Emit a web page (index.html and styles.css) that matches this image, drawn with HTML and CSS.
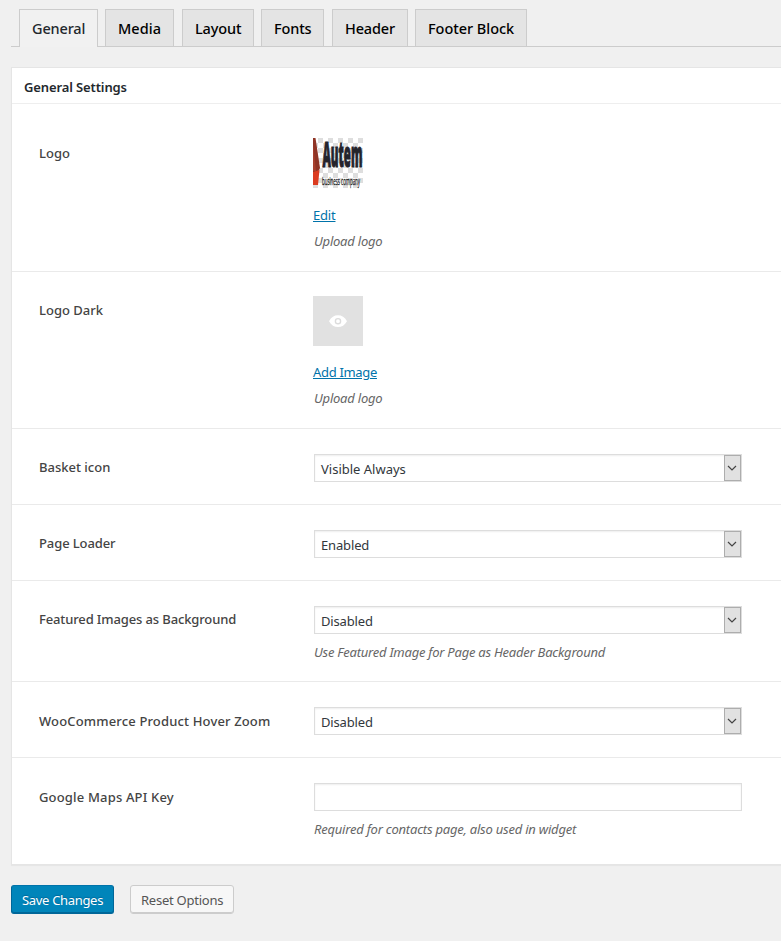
FILE: index.html
```html
<!DOCTYPE html>
<html lang="en">
<head>
<meta charset="utf-8">
<title>General Settings</title>
<link rel="stylesheet" href="styles.css">
</head>
<body>
<nav class="tabs">
  <a class="tab tab-general active"><span>General</span></a>
  <a class="tab tab-media"><span>Media</span></a>
  <a class="tab tab-layout"><span>Layout</span></a>
  <a class="tab tab-fonts"><span>Fonts</span></a>
  <a class="tab tab-header"><span>Header</span></a>
  <a class="tab tab-footer"><span>Footer Block</span></a>
</nav>
<main class="panel">
  <h2><span>General Settings</span></h2>
  <section class="row row-logo">
    <div class="label"><span>Logo</span></div>
    <div class="media">
      <svg class="thumb" viewBox="0 0 50 50">
        <defs><pattern id="checks" width="10" height="10" patternUnits="userSpaceOnUse"><path fill="#dedede" d="M5 0h5v5H5zM0 5h5v5H0z"/></pattern></defs>
        <path fill="#fff" d="M0 0h50v50H0z"/>
        <path fill="url(#checks)" d="M0 0h50v50H0z"/>
        <path fill="#8f3425" d="M0 0h2.500l4.500 30-2 4H0z"/>
        <path fill="#a8402e" d="M0 6l3 27H0z"/>
        <path fill="#db3b20" d="M0 34l6.500-2-1.500 15H0z"/>
        <text class="logo-name" x="9.500" y="29" textLength="40" lengthAdjust="spacingAndGlyphs">Autem</text>
        <text class="logo-tag" x="9" y="47" textLength="38" lengthAdjust="spacingAndGlyphs">business company</text>
      </svg>
      <a class="link"><span class="t-edit">Edit</span></a>
      <p class="note"><span class="t-upload">Upload logo</span></p>
    </div>
  </section>
  <section class="row row-dark">
    <div class="label"><span class="t-dark">Logo Dark</span></div>
    <div class="media">
      <svg class="thumb empty" viewBox="0 0 50 50"><path fill="#fff" d="M16 25.200C18.200 21.200 21.300 19.300 25 19.300s6.800 1.900 9 5.900c-2.200 4-5.300 5.900-9 5.900s-6.800-1.900-9-5.900z"/><circle cx="25" cy="25.200" r="2.600" fill="none" stroke="#dcdcdc" stroke-width="1.400"/></svg>
      <a class="link"><span class="t-add">Add Image</span></a>
      <p class="note"><span class="t-upload">Upload logo</span></p>
    </div>
  </section>
  <section class="row row-short">
    <div class="label"><span class="t-basket">Basket icon</span></div>
    <div class="control"><div class="select"><span class="t-visible">Visible Always</span><i class="drop"><svg viewBox="0 0 15 24"><path d="M3 10l4 4 4-4"/></svg></i></div></div>
  </section>
  <section class="row row-short">
    <div class="label"><span class="t-loader">Page Loader</span></div>
    <div class="control"><div class="select"><span class="t-enabled">Enabled</span><i class="drop"><svg viewBox="0 0 15 24"><path d="M3 10l4 4 4-4"/></svg></i></div></div>
  </section>
  <section class="row row-featured">
    <div class="label"><span class="t-featured">Featured Images as Background</span></div>
    <div class="control"><div class="select"><span class="t-disabled">Disabled</span><i class="drop"><svg viewBox="0 0 15 24"><path d="M3 10l4 4 4-4"/></svg></i></div>
    <p class="note"><span class="t-use">Use Featured Image for Page as Header Background</span></p></div>
  </section>
  <section class="row row-short lower">
    <div class="label"><span class="t-woo">WooCommerce Product Hover Zoom</span></div>
    <div class="control"><div class="select"><span class="t-disabled">Disabled</span><i class="drop"><svg viewBox="0 0 15 24"><path d="M3 10l4 4 4-4"/></svg></i></div></div>
  </section>
  <section class="row row-key lower">
    <div class="label"><span class="t-google">Google Maps API Key</span></div>
    <div class="control"><input class="field" type="text" aria-label="Google Maps API Key">
    <p class="note"><span class="t-required">Required for contacts page, also used in widget</span></p></div>
  </section>
</main>
<div class="actions">
  <button class="button primary"><span>Save Changes</span></button>
  <button class="button reset"><span>Reset Options</span></button>
</div>
</body>
</html>
```
FILE: styles.css
```css
* { box-sizing: border-box; }
body { margin: 0; height: 941px; overflow: hidden; background: #f0f0f0; color: #444; font: 13px/20px "Noto Sans", sans-serif; }
span { white-space: nowrap; }
p, h2 { margin: 0; }
.tabs { display: flex; margin-left: 11px; padding: 9px 0 0 8px; height: 47px; border-bottom: 1px solid #ccc; }
.tab { height: 37px; border: 1px solid #ccc; border-bottom: 0; background: #e4e4e4; color: #000; font-size: 14.500px; font-weight: 500; line-height: 36px; letter-spacing: -.15px; padding-left: 12px; margin-right: 7px; }
.tab.active { height: 38px; background: #f1f1f1; color: #23282d; }
.tab-general { width: 79px; }
.tab.tab-media { width: 69px; margin-right: 8px; letter-spacing: .05px; }
.tab-layout { width: 72px; }
.tab-fonts { width: 63px; margin-right: 8px; }
.tab-header { width: 76px; }
.tab.tab-footer { width: 112px; letter-spacing: -.04px; }
.panel { margin: 20px 0 0 11px; width: 790px; height: 798px; background: #fff; border: 1px solid #e5e5e5; box-shadow: 0 1px 1px rgba(0,0,0,.04); }
h2 { height: 36px; padding-left: 12px; border-bottom: 1px solid #eee; color: #23282d; font-size: 13px; font-weight: 600; line-height: 38px; letter-spacing: -.12px; }
.row { display: grid; grid-template-columns: 274px 430px; padding: 25px 0 0 27px; border-bottom: 1px solid #eaeaea; }
.row-logo { height: 168px; padding-top: 34px; }
.row-dark { height: 157px; padding-top: 24px; }
.row-short { height: 76px; }
.row-featured { height: 101px; }
.row-key { height: 107px; border-bottom: 0; }
.label { padding-top: 3px; font-weight: 500; }
.lower .label { padding-top: 4px; }
.row-logo .label, .row-dark .label { padding-top: 4px; }
.row-logo .label { padding-top: 5px; }
.thumb { display: block; width: 50px; height: 50px; overflow: visible; }
.empty { background: #e1e1e1; }
.logo-name { font: 800 35px "Open Sans", sans-serif; fill: #24242c; stroke: #24242c; stroke-width: 1.200; }
.logo-tag { font: 11px "Open Sans", sans-serif; fill: #222; stroke: #222; stroke-width: .3; }
.link { display: block; margin-top: 17px; color: #0073aa; text-decoration: underline; }
.row-dark .link { margin-top: 16px; }
.note { color: #666; font-style: italic; }
.media .note { margin-top: 6px; padding-left: 1px; }
.control { padding-left: 1px; }
.control .note { margin-top: 8px; }
.select, .field { display: flex; width: 428px; height: 28px; border: 1px solid #ddd; background: #fff; box-shadow: inset 0 1px 2px rgba(0,0,0,.07); color: #32373c; }
.select { justify-content: space-between; padding-left: 6px; line-height: 28px; }
.drop { width: 17px; height: 26px; border: 1px solid #adadad; background: #e1e1e1; }
.drop svg { display: block; width: 15px; height: 24px; fill: none; stroke: #444; stroke-width: 1.200; }
.field { padding: 3px 5px; outline: 0; }
.t-edit { letter-spacing: -.2px; }
.t-upload { letter-spacing: -.22px; }
.t-add { letter-spacing: -.32px; }
.t-loader { letter-spacing: -.1px; }
.t-enabled, .t-disabled { letter-spacing: -.15px; }
.t-featured { letter-spacing: -.13px; }
.t-woo { letter-spacing: .15px; }
.t-google { letter-spacing: .17px; }
.t-use { letter-spacing: -.24px; }
.t-required { letter-spacing: -.22px; }
.actions { display: flex; gap: 16px; margin: 20px 0 0 11px; }
.button { height: 29px; border: 1px solid #ccc; border-radius: 3px; padding: 1px 0 0 10px; background: #f7f7f7; box-shadow: inset 0 -1px #ccc; color: #555; font: 13px/26px "Noto Sans", sans-serif; letter-spacing: -.24px; text-align: left; width: 104px; }
.primary { width: 103px; background: #0085ba; border-color: #0073aa #006799 #006799; box-shadow: inset 0 -1px #006799; color: #fff; text-shadow: 0 -1px 1px #006799; letter-spacing: -.32px; }
```
